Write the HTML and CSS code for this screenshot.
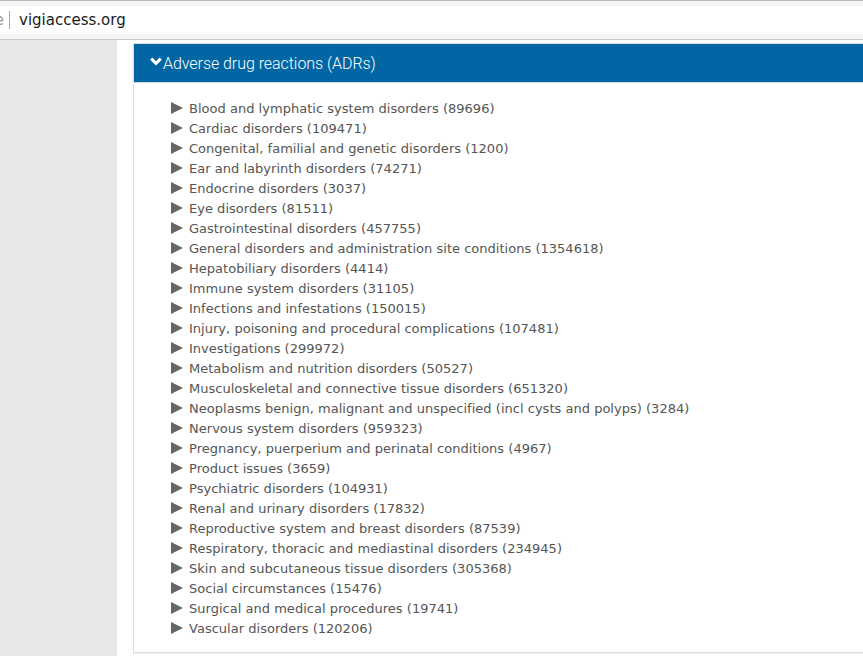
FILE: index.html
```html
<!DOCTYPE html>
<html>
<head>
<meta charset="utf-8">
<link rel="stylesheet" href="styles.css">
</head>
<body>
<div class="browser-bar">
  <div class="address">
    <span class="cut">e</span>
    <span class="sep"></span>
    <span class="url">vigiaccess.org</span>
  </div>
</div>
<div class="page">
  <div class="sidebar"></div>
  <div class="main">
    <div class="panel">
      <div class="panel-head">
        <svg class="chev" width="12" height="9" viewBox="0 0 12 9"><path d="M1.2 1.6 L6 6.4 L10.8 1.6" fill="none" stroke="#fff" stroke-width="3" stroke-linejoin="miter"/></svg>
        <span>Adverse drug reactions (ADRs)</span>
      </div>
      <ul class="list">
        <li><span class="tri"></span>Blood and lymphatic system disorders (89696)</li>
        <li><span class="tri"></span>Cardiac disorders (109471)</li>
        <li><span class="tri"></span>Congenital, familial and genetic disorders (1200)</li>
        <li><span class="tri"></span>Ear and labyrinth disorders (74271)</li>
        <li><span class="tri"></span>Endocrine disorders (3037)</li>
        <li><span class="tri"></span>Eye disorders (81511)</li>
        <li><span class="tri"></span>Gastrointestinal disorders (457755)</li>
        <li><span class="tri"></span>General disorders and administration site conditions (1354618)</li>
        <li><span class="tri"></span>Hepatobiliary disorders (4414)</li>
        <li><span class="tri"></span>Immune system disorders (31105)</li>
        <li><span class="tri"></span>Infections and infestations (150015)</li>
        <li><span class="tri"></span>Injury, poisoning and procedural complications (107481)</li>
        <li><span class="tri"></span>Investigations (299972)</li>
        <li><span class="tri"></span>Metabolism and nutrition disorders (50527)</li>
        <li><span class="tri"></span>Musculoskeletal and connective tissue disorders (651320)</li>
        <li><span class="tri"></span>Neoplasms benign, malignant and unspecified (incl cysts and polyps) (3284)</li>
        <li><span class="tri"></span>Nervous system disorders (959323)</li>
        <li><span class="tri"></span>Pregnancy, puerperium and perinatal conditions (4967)</li>
        <li><span class="tri"></span>Product issues (3659)</li>
        <li><span class="tri"></span>Psychiatric disorders (104931)</li>
        <li><span class="tri"></span>Renal and urinary disorders (17832)</li>
        <li><span class="tri"></span>Reproductive system and breast disorders (87539)</li>
        <li><span class="tri"></span>Respiratory, thoracic and mediastinal disorders (234945)</li>
        <li><span class="tri"></span>Skin and subcutaneous tissue disorders (305368)</li>
        <li><span class="tri"></span>Social circumstances (15476)</li>
        <li><span class="tri"></span>Surgical and medical procedures (19741)</li>
        <li><span class="tri"></span>Vascular disorders (120206)</li>
      </ul>
    </div>
  </div>
</div>
</body>
</html>
```
FILE: styles.css
```css
html, body {
  margin: 0;
  padding: 0;
  background: #fff;
  overflow: hidden;
}
body {
  width: 863px;
  height: 656px;
  font-family: "DejaVu Sans", sans-serif;
}
.browser-bar {
  height: 38px;
  border-top: 1px solid #b9b9b9;
  border-bottom: 1px solid #c8c8c8;
  background: #f5f5f5;
  box-sizing: content-box;
  display: flex;
  flex-direction: column;
  justify-content: center;
}
.address {
  height: 28px;
  background: #fff;
  display: flex;
  align-items: center;
}
.cut {
  font-size: 15px;
  color: #999;
  width: 4px;
  overflow: hidden;
  direction: rtl;
}
.sep {
  display: inline-block;
  width: 1px;
  height: 18px;
  background: #aaa;
  margin-left: 5px;
}
.url {
  font-size: 15px;
  color: #1a1a1a;
  margin-left: 9px;
}
.page {
  display: flex;
  height: 617px;
}
.sidebar {
  width: 117px;
  background: #e8e8e8;
  flex: none;
}
.main {
  flex: 1;
  padding: 3px 0 0 16px;
  min-width: 0;
}
.panel {
  border: 1px solid #dcdcdc;
  border-right: none;
  box-shadow: 0 1px 1px rgba(0,0,0,0.06);
  background: #fff;
}
.panel-head {
  height: 38px;
  background: #0066a4;
  border-bottom: 1px solid #d8d8d8;
  display: flex;
  align-items: center;
  padding-left: 16px;
  color: #fff;
  font-family: Roboto, sans-serif;
  font-weight: 300;
  font-size: 16px;
  letter-spacing: -0.05px;
}
.chev {
  margin-right: 1px;
  margin-top: -3px;
}
.list {
  list-style: none;
  margin: 0;
  padding: 16px 0 13px 37px;
  font-size: 13px;
  letter-spacing: 0.02px;
  color: #555;
}
.list li {
  height: 20px;
  line-height: 20px;
  display: flex;
  align-items: center;
  white-space: nowrap;
}
.tri {
  width: 0;
  height: 0;
  border-top: 6px solid transparent;
  border-bottom: 6px solid transparent;
  border-left: 12px solid #666;
  margin-right: 6px;
  margin-top: -3px;
}
```
